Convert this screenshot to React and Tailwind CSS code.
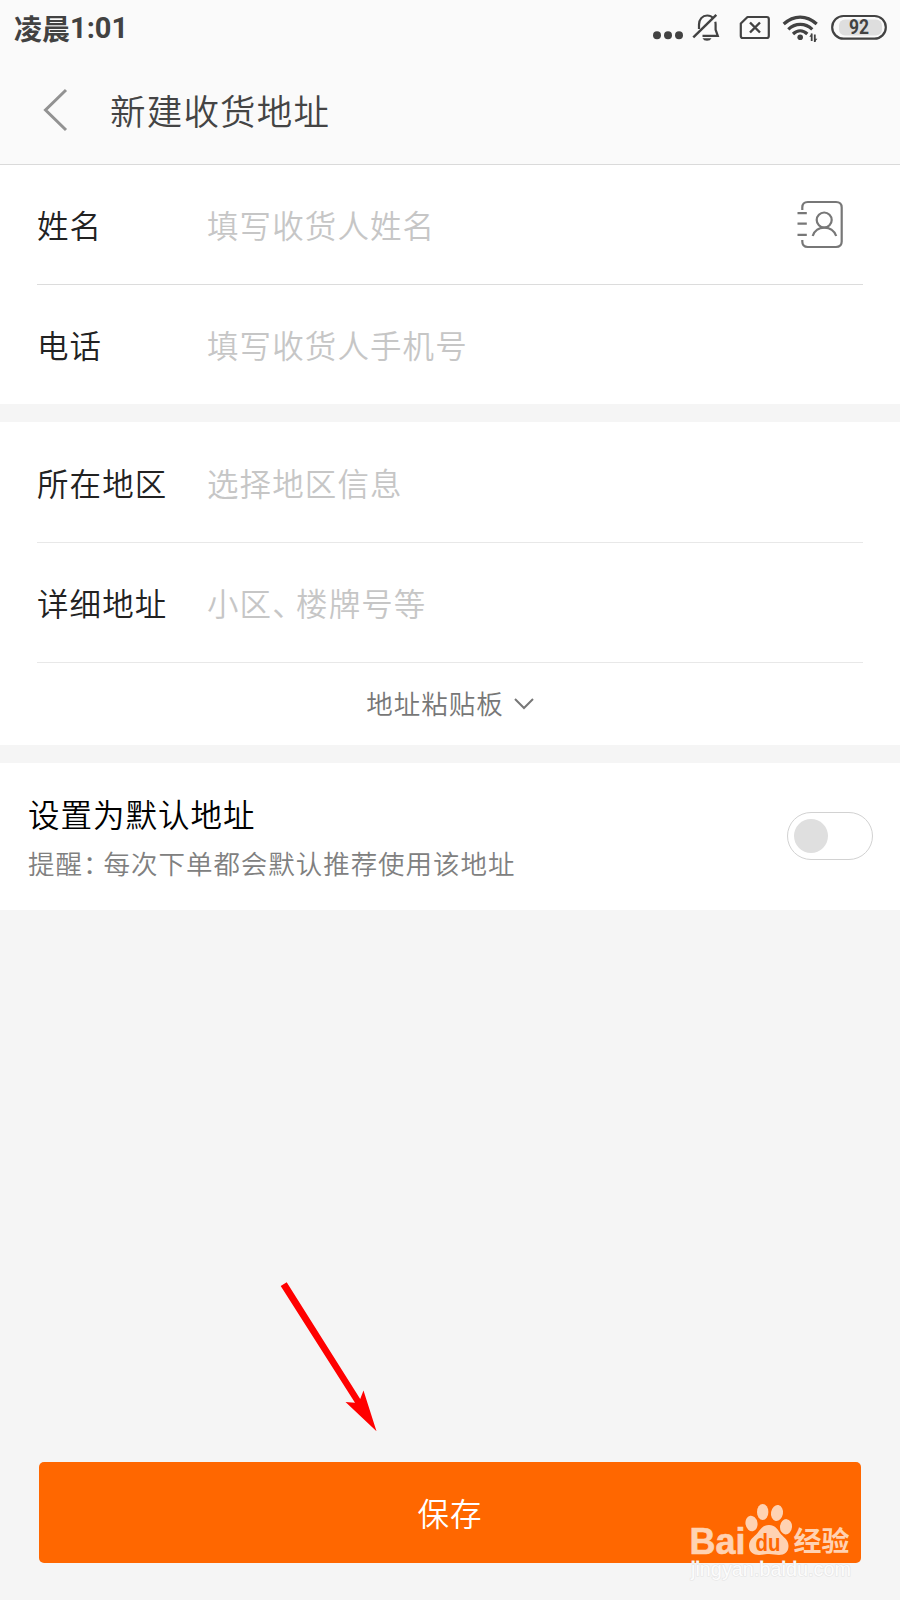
import React from "react";

function StatusBar() {
  return (
    <div className="flex h-14 items-center justify-between pl-[14px] pr-[13px] text-[#424242]">
      <div className="flex items-center text-[28px] font-bold leading-none">
        <span className="pb-px">凌晨</span>
        <span className="font-[Roboto] text-[29px] tracking-[0px]">1:01</span>
      </div>
      <svg width="260" height="56" viewBox="640 0 260 56" className="-mr-[13px]" fill="none" stroke="#424242" strokeWidth="2.2">
        <g fill="#424242" stroke="none">
          <circle cx="657" cy="35.3" r="4" />
          <circle cx="668" cy="35.3" r="4" />
          <circle cx="679" cy="35.3" r="4" />
          <path d="M702.5 38.2h9a4.8 4 0 0 1-9 0z" />
        </g>
        <path d="M699 29v-4.5c0-5 3.3-9 8.2-9 2.6 0 4.6 1 6 2.6M715.3 21.7c.3 1 .3 2 .3 3v5l2.2 6.2H702.5" />
        <path d="M693.3 37.3 716.3 14.8" strokeWidth="2.4" />
        <path d="M747.5 17h19.3a2 2 0 0 1 2 2v17a2 2 0 0 1-2 2h-24a2 2 0 0 1-2-2V23.5z" strokeLinejoin="round" />
        <path d="m750 22.5 10 10m0-10-10 10" strokeWidth="2.4" />
        <path d="M783.7 24c10-9.300 23-9.300 33 0M788.3 29.300c7-6.600 17-6.600 24 0M793 34c4.400-4.100 10-4.100 14.300 0" strokeWidth="3.200" />
        <circle cx="800.2" cy="37.200" r="2.800" fill="#424242" stroke="none" />
        <path d="M811.700 33.500v7.500M814.800 34.500v7.500" strokeWidth="1.800" />
        <path d="m812 33.200-2.700 3.500h2.700zM814.500 42.300l2.900-3.500h-2.900z" fill="#424242" stroke="none" />
        <rect x="832.200" y="16" width="53.600" height="22.700" rx="11.300" />
        <rect x="839" y="19.500" width="43" height="16" rx="6" fill="#dedede" stroke="none" />
        <text x="859" y="34" textAnchor="middle" textLength="20" lengthAdjust="spacingAndGlyphs" className="font-[Roboto] text-[20px] font-bold" fill="#424242" stroke="none">92</text>
      </svg>
    </div>
  );
}

function Row({ label, placeholder, children, last, line }) {
  return (
    <div className={`flex items-center ${last ? "h-[119px]" : "h-[120px] border-b"} ${line}`}>
      <span className="w-[170px] text-[31.5px] font-[350] leading-none tracking-[1.1px] text-[#222]">{label}</span>
      <span className="flex-1 text-[31.5px] font-[350] leading-none tracking-[1.1px] text-[#c6c6c6]">{placeholder}</span>
      {children}
    </div>
  );
}

function ContactIcon() {
  return (
    <svg width="48" height="50" viewBox="796 199 48 50" className="mb-px mr-[19px]" fill="none" stroke="#777" strokeWidth="2.2">
      <path d="M802.300 210v-2.500q0-5.500 5.500-5.500H836q5.700 0 5.700 5.500v34q0 5.500-5.700 5.500h-28.200q-5.500 0-5.500-5.500V240" />
      <path d="M797.500 213.200h9.300M797.500 223.700h9.300M797.500 234.800h9.300" />
      <circle cx="824.200" cy="220" r="7.500" />
      <path d="M812.700 236c3.300-11.300 19.800-11.300 23.500 0" />
    </svg>
  );
}

function Watermark() {
  return (
    <svg width="180" height="90" viewBox="680 1495 180 90" className="absolute left-[680px] top-[1495px]">
      <g fill="#ffd2b2">
        <text x="689.500" y="1553.500" textLength="56" lengthAdjust="spacingAndGlyphs" className="font-['Liberation_Sans'] text-[37px] font-bold" stroke="#ffd2b2" strokeWidth="0.600">Bai</text>
        <ellipse cx="751.500" cy="1523.500" rx="6" ry="7.800" transform="rotate(-10 751.500 1523.500)" />
        <ellipse cx="762.700" cy="1512" rx="5.700" ry="8" />
        <ellipse cx="777" cy="1513" rx="6" ry="8" transform="rotate(10 777 1513)" />
        <ellipse cx="786" cy="1526.800" rx="6" ry="7.700" transform="rotate(5 786 1526.800)" />
        <path d="M769 1525c6 0 8.500 4 11 8 3 4 8.500 6.500 8.500 13 0 6-4 9-9.500 9-4 0-6-1-10-1s-6 1-10 1c-5.500 0-10-3-10-9 0-6.500 5-9 8.500-13 3-4 5.500-8 11.500-8z" />
        <text x="793.500" y="1551" textLength="56" lengthAdjust="spacingAndGlyphs" className="text-[27px] font-bold">经验</text>
      </g>
      <text x="755.500" y="1550.500" textLength="25" lengthAdjust="spacingAndGlyphs" className="font-['Liberation_Sans'] text-[23px] font-bold" fill="#ff6700">du</text>
      <text x="691" y="1575.500" textLength="160" lengthAdjust="spacingAndGlyphs" className="font-['Liberation_Sans'] text-[21px]" fill="#fcfcfc" stroke="#e4e4e4" strokeWidth="1.200" paintOrder="stroke">jingyan.baidu.com</text>
    </svg>
  );
}

export default function App() {
  return (
    <main lang="zh-CN" className="relative flex h-[1600px] w-[900px] flex-col overflow-hidden bg-[#f5f5f5] font-['Noto_Sans_CJK_SC',sans-serif]">
      <header className="h-[165px] border-b border-[#dadada] bg-[#fafafa]">
        <StatusBar />
        <div className="flex h-[108px] items-center pl-[42px]">
          <svg width="26" height="44" viewBox="0 0 26 44" fill="none" stroke="#929292" strokeWidth="3">
            <path d="M24 2 3.500 22 24 42" />
          </svg>
          <h1 className="ml-[42px] text-[35.500px] font-[350] leading-none tracking-[1.200px] text-[#444]">新建收货地址</h1>
        </div>
      </header>

      <section className="h-[239px] bg-white px-[37px]">
        <Row label="姓名" placeholder="填写收货人姓名" line="border-[#dcdcdc]">
          <ContactIcon />
        </Row>
        <Row label="电话" placeholder="填写收货人手机号" last line="" />
      </section>

      <section className="mt-[18px] h-[323px] bg-white px-[37px] pt-px">
        <Row label="所在地区" placeholder="选择地区信息" line="border-[#e8e8e8]" />
        <Row
          label="详细地址"
          placeholder={<>小区<span className="mr-[7px] [font-feature-settings:'halt']">、</span>楼牌号等</>}
          line="border-[#e8e8e8]"
        />
        <div className="flex h-[82px] items-center justify-center gap-[10px]">
          <span className="pb-[2px] text-[26.500px] font-[350] leading-none tracking-[1px] text-[#777]">地址粘贴板</span>
          <svg width="20" height="14" viewBox="0 0 20 14" fill="none" stroke="#777" strokeWidth="2">
            <path d="m1 2 9 9 9-9" />
          </svg>
        </div>
      </section>

      <section className="mt-[18px] flex h-[147px] items-center justify-between bg-white pl-[28px] pr-[27px]">
        <div className="pt-[3px]">
          <h2 className="text-[31.500px] font-[350] leading-[48px] tracking-[1.000px] text-black">设置为默认地址</h2>
          <p className="pt-px text-[26.500px] font-[350] leading-[50px] tracking-[0.950px] text-[#808080]">
            提醒<span className="mr-[6.5px] [font-feature-settings:'halt']">：</span>每次下单都会默认推荐使用该地址
          </p>
        </div>
        <div className="mb-[2px] flex h-[48px] w-[86px] items-center rounded-full border border-[#d2d2d2] pl-[6px]">
          <span className="size-[34px] rounded-full bg-[#dfdfdf]" />
        </div>
      </section>

      <button className="mx-[39px] mb-[37px] mt-auto flex h-[101px] items-center justify-center rounded-[5px] bg-[#ff6700] pt-px text-[31.500px] font-[350] tracking-[1px] text-white">
        保存
      </button>

      <svg width="100" height="155" viewBox="280 1280 100 155" className="absolute left-[280px] top-[1280px]" fill="#f00">
        <path d="m280.700 1286 6-3.700 73.500 116.700 3.300-8.500 13 40.700-31-29.200 9.500.8z" />
      </svg>
      <Watermark />
    </main>
  );
}
